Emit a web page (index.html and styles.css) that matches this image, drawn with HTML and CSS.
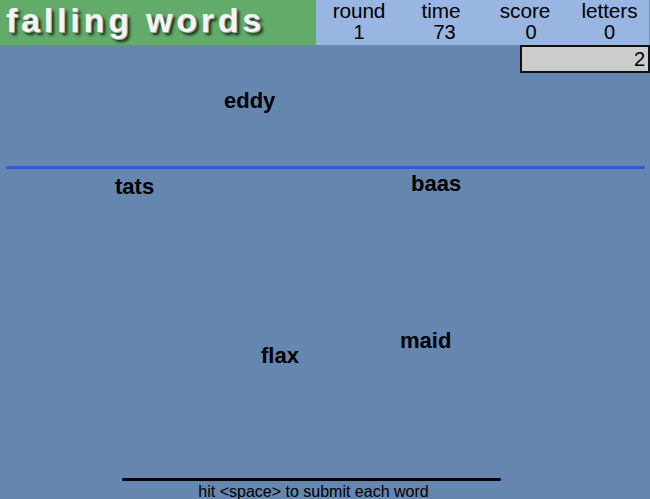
FILE: index.html
```html
<!DOCTYPE html>
<html lang="en"><head><meta charset="utf-8"><title>falling words</title><link rel="stylesheet" href="styles.css"></head>
<body>
<main class="game">
<header class="bar">
<h1 class="title">falling words</h1>
<dl class="stats">
<div class="stat"><dt>round</dt><dd>1</dd></div>
<div class="stat time"><dt>time</dt><dd>73</dd></div>
<div class="stat score"><dt>score</dt><dd>0</dd></div>
<div class="stat"><dt>letters</dt><dd>0</dd></div>
</dl>
</header>
<section class="field">
<div class="bonus">2</div>
<div class="danger"></div>
<span class="word eddy">eddy</span>
<span class="word tats">tats</span>
<span class="word baas">baas</span>
<span class="word maid">maid</span>
<span class="word flax">flax</span>
</section>
<footer class="entry">hit &lt;space&gt; to submit each word</footer>
</main>
</body></html>
```
FILE: styles.css
```css
* { box-sizing: border-box; }
body { margin: 0; font-family: "Liberation Sans", Arial, sans-serif; color: #000; }
.game { width: 650px; height: 499px; background: #6586af; display: flex; flex-direction: column; overflow: hidden; }
.bar { display: flex; height: 45px; flex: none; background: #62ab68; }
.title { margin: 0; width: 316px; padding-left: 6px; color: #f4f4f4; font-size: 34px; line-height: 40px; letter-spacing: 3.8px; white-space: nowrap; text-shadow: 1px 1px 0 #aaa, 3px 3px 3px #102818; }
.stats { margin: 0; width: 333px; display: grid; grid-template-columns: 86px 78px 90px 79px; background: #98b6e1; text-align: center; line-height: 22px; }
.stat dt { font-size: 20.8px; letter-spacing: -0.1px; }
.stat dd { margin: 0; font-size: 20px; line-height: 21px; }
.time dd { padding-left: 7px; }
.score dd { padding-left: 12px; }
.field { position: relative; flex: 1; }
.bonus { width: 130px; height: 28px; margin-left: auto; border: 2px solid #111; background: #ccc; padding-right: 3px; text-align: right; font-size: 20px; line-height: 24px; }
.danger { height: 3px; margin: 93px 5px 0 6px; background: #2f5bd7; border-radius: 2px; }
.word { position: absolute; font-size: 22px; line-height: 26px; font-weight: bold; }
.eddy { left: 224px; top: 43px; }
.tats { left: 115px; top: 129px; }
.baas { left: 411px; top: 126px; }
.maid { left: 400px; top: 283px; }
.flax { left: 261px; top: 298px; }
.entry { position: relative; width: 379px; height: 20px; margin-left: 122px; padding-left: 4px; text-align: center; font-size: 16px; line-height: 25px; }
.entry::before { content: ""; position: absolute; inset: -1px 0 auto; height: 3px; border-radius: 2px; background: #000; }
```
